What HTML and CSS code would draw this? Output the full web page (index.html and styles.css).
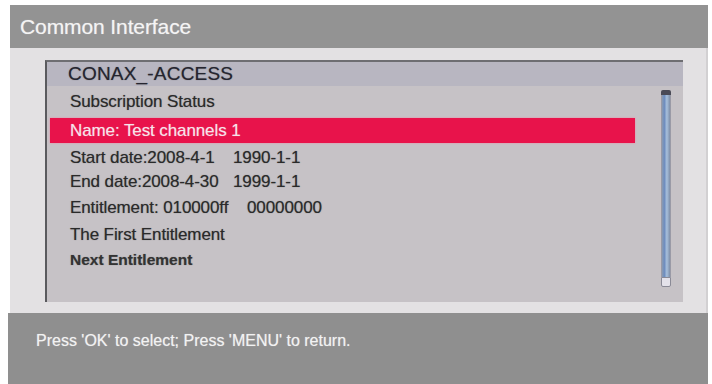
FILE: index.html
```html
<!DOCTYPE html>
<html>
<head>
<meta charset="utf-8">
<link rel="stylesheet" href="styles.css">
</head>
<body>
<div class="frame">
  <div class="header">Common Interface</div>
  <div class="main">
    <div class="panel">
      <div class="title">CONAX_-ACCESS</div>
      <div class="content">
        <div class="list">
          <div class="row sub">Subscription Status</div>
          <div class="row sel">Name: Test channels 1</div>
          <div class="row r-start"><span class="c1">Start date:2008-4-1</span><span>1990-1-1</span></div>
          <div class="row r-end"><span class="c1">End date:2008-4-30</span><span>1999-1-1</span></div>
          <div class="row r-ent"><span class="c2">Entitlement: 010000ff</span><span>00000000</span></div>
          <div class="row r-first">The First Entitlement</div>
          <div class="row r-next">Next Entitlement</div>
        </div>
        <div class="scroll"><div class="cap top"></div><div class="track"></div><div class="cap bottom"></div></div>
      </div>
    </div>
  </div>
  <div class="footer">Press 'OK' to select; Press 'MENU' to return.</div>
</div>
</body>
</html>
```

FILE: styles.css
```css
html, body {
  margin: 0;
  padding: 0;
  background: #ffffff;
  width: 712px;
  height: 384px;
  overflow: hidden;
}
body {
  font-family: "Liberation Sans", Arial, sans-serif;
}
.frame {
  margin: 5px 0 0 10px;
  width: 698px;
  display: flex;
  flex-direction: column;
}
.header {
  height: 43px;
  background: #939393;
  color: #f4f4f4;
  font-size: 21px;
  line-height: 43px;
  padding-left: 10px;
  letter-spacing: -0.1px;
  text-shadow: 0 0 1px rgba(255,255,255,0.5);
}
.main {
  height: 265px;
  background: #e3e1e3;
  padding: 12px 0 0 35px;
  box-sizing: border-box;
  border-right: 2px solid #d2d0d2;
}
.panel {
  width: 638px;
  height: 242px;
  box-sizing: border-box;
  background: #c6c2c6;
  border-top: 2px solid #6e6e72;
  border-left: 2px solid #5a5a5e;
}
.title {
  height: 24px;
  line-height: 24px;
  background: #b8b6c1;
  color: #25252f;
  font-size: 19px;
  letter-spacing: 0.2px;
  padding-left: 21px;
  text-shadow: 0 0 1px rgba(30,30,40,0.5);
}
.content {
  display: flex;
}
.list {
  width: 588px;
  padding-left: 3px;
  box-sizing: border-box;
  color: #2a2a2a;
  font-size: 17px;
  letter-spacing: -0.1px;
  text-shadow: 0 0 1px rgba(40,40,40,0.5);
}
.row {
  height: 24px;
  line-height: 24px;
  padding-left: 20px;
  white-space: nowrap;
}
.sub {
  height: 32px;
  line-height: 32px;
}
.sel {
  height: 25px;
  line-height: 25px;
  background: #e8134b;
  color: #f6e4ea;
  box-shadow: 0 0 2px #f08aa6;
  text-shadow: 0 0 1px rgba(255,220,230,0.5);
}
.r-start { margin-top: 3px; }
.r-ent { margin-top: 2px; }
.r-first { margin-top: 3px; }
.r-next { margin-top: 1px; font-size: 15.5px; font-weight: bold; letter-spacing: 0; color: #333; }
.c1 {
  display: inline-block;
  width: 163px;
}
.c2 {
  display: inline-block;
  width: 177px;
}
.scroll {
  margin: 4px 0 0 26px;
  width: 10px;
  height: 197px;
  display: flex;
  flex-direction: column;
}
.track {
  flex: 1;
  background: linear-gradient(to right, #8a9cb4 0, #6d8cbe 30%, #a8c0dc 60%, #7f8fa8 100%);
  border-left: 1px solid #9a9aa6;
  border-right: 1px solid #9a9aa6;
}
.cap {
  height: 5px;
  background: #4a4a56;
  border-radius: 2px 2px 0 0;
}
.cap.bottom {
  height: 8px;
  background: #e4e2ea;
  border: 1px solid #8a8a96;
  border-radius: 0 0 2px 2px;
}
.footer {
  height: 71px;
  margin-left: -2px;
  background: #8f8f8f;
  color: #f2f2f2;
  font-size: 16px;
  line-height: 54px;
  padding: 1px 0 0 28px;
  box-sizing: border-box;
  letter-spacing: 0;
  text-shadow: 0 0 1px rgba(255,255,255,0.5);
}
```
